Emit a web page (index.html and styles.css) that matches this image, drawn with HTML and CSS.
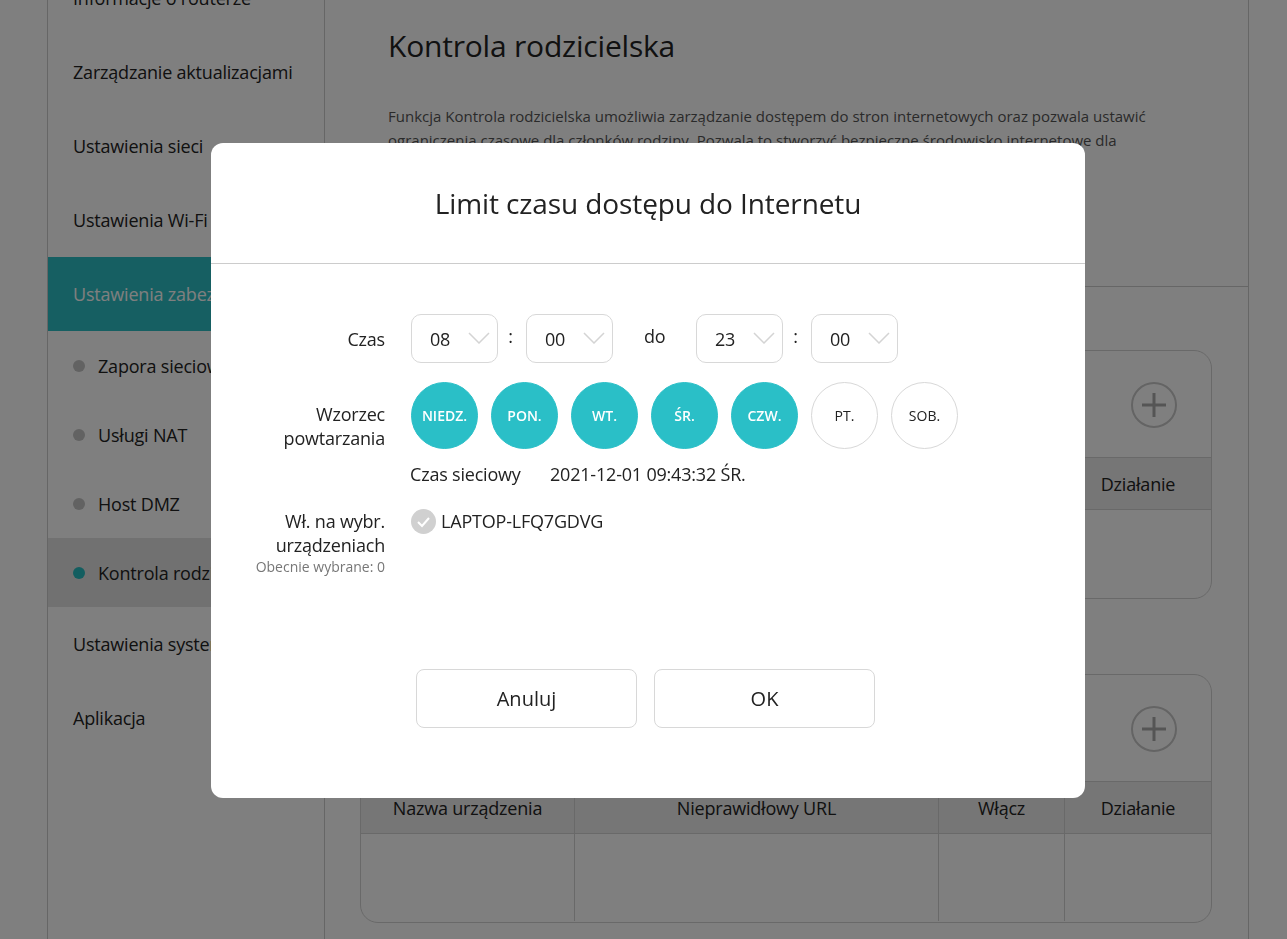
FILE: index.html
```html
<!DOCTYPE html>
<html lang="pl">
<head>
<meta charset="utf-8">
<title>Kontrola rodzicielska</title>
<link rel="stylesheet" href="styles.css">
</head>
<body>
<div class="page">
  <nav class="sidebar">
    <div class="item">Informacje o routerze</div>
    <div class="item">Zarządzanie aktualizacjami</div>
    <div class="item">Ustawienia sieci</div>
    <div class="item">Ustawienia Wi-Fi</div>
    <div class="item item-active">Ustawienia zabezpieczeń</div>
    <div class="sub"><i class="dot"></i>Zapora sieciowa</div>
    <div class="sub"><i class="dot"></i>Usługi NAT</div>
    <div class="sub"><i class="dot"></i>Host DMZ</div>
    <div class="sub sub-active"><i class="dot"></i>Kontrola rodzicielska</div>
    <div class="item">Ustawienia systemu</div>
    <div class="item">Aplikacja</div>
  </nav>
  <main class="content">
    <header class="intro">
      <h1 class="page-title">Kontrola rodzicielska</h1>
      <p class="desc">Funkcja Kontrola rodzicielska umożliwia zarządzanie dostępem do stron internetowych oraz pozwala ustawić ograniczenia czasowe dla członków rodziny. Pozwala to stworzyć bezpieczne środowisko internetowe dla</p>
    </header>
    <section class="panel panel-first">
      <div class="panel-top">
        <span class="plus"><svg width="46" height="46" viewBox="0 0 46 46"><path d="M11 23h24M23 11v24"/></svg></span>
      </div>
      <div class="row row-head">
        <div class="cell"></div><div class="cell"></div><div class="cell"></div><div class="cell">Działanie</div>
      </div>
      <div class="row row-body plain"></div>
    </section>
    <section class="panel panel-second">
      <div class="panel-top">
        <span class="plus"><svg width="46" height="46" viewBox="0 0 46 46"><path d="M11 23h24M23 11v24"/></svg></span>
      </div>
      <div class="row row-head">
        <div class="cell">Nazwa urządzenia</div><div class="cell">Nieprawidłowy URL</div><div class="cell">Włącz</div><div class="cell">Działanie</div>
      </div>
      <div class="row row-body">
        <div class="cell"></div><div class="cell"></div><div class="cell"></div><div class="cell"></div>
      </div>
    </section>
  </main>
</div>

<div class="overlay"></div>

<div class="modal">
  <h2 class="modal-title">Limit czasu dostępu do Internetu</h2>
  <div class="form">
    <div class="label label-time">Czas</div>
    <div class="times">
      <div class="select"><span>08</span><svg class="chev" width="22" height="12" viewBox="0 0 22 12"><path d="M1 1l10 10L21 1"/></svg></div>
      <span class="colon">:</span>
      <div class="select"><span>00</span><svg class="chev" width="22" height="12" viewBox="0 0 22 12"><path d="M1 1l10 10L21 1"/></svg></div>
      <span class="to">do</span>
      <div class="select"><span>23</span><svg class="chev" width="22" height="12" viewBox="0 0 22 12"><path d="M1 1l10 10L21 1"/></svg></div>
      <span class="colon">:</span>
      <div class="select"><span>00</span><svg class="chev" width="22" height="12" viewBox="0 0 22 12"><path d="M1 1l10 10L21 1"/></svg></div>
    </div>
    <div class="label label-repeat">Wzorzec<br>powtarzania</div>
    <div class="repeat">
      <div class="days">
        <span class="day on">NIEDZ.</span>
        <span class="day on">PON.</span>
        <span class="day on">WT.</span>
        <span class="day on">ŚR.</span>
        <span class="day on">CZW.</span>
        <span class="day">PT.</span>
        <span class="day">SOB.</span>
      </div>
      <div class="nettime"><span class="nettime-label">Czas sieciowy</span><span>2021-12-01 09:43:32 ŚR.</span></div>
    </div>
    <div class="label label-dev">Wł. na wybr.<br>urządzeniach<small>Obecnie wybrane: 0</small></div>
    <div class="device">
      <svg class="check" width="25" height="25" viewBox="0 0 25 25"><circle cx="12.5" cy="12.5" r="12.5"/><path d="M7 13l4 4 7-8"/></svg>
      <span>LAPTOP-LFQ7GDVG</span>
    </div>
  </div>
  <div class="actions">
    <button class="btn">Anuluj</button>
    <button class="btn">OK</button>
  </div>
</div>
</body>
</html>
```
FILE: styles.css
```css
* { box-sizing: border-box; }
html, body { margin: 0; height: 100%; overflow: hidden; }
body {
  background: #fff;
  color: #222;
  font-family: "Open Sans", "Noto Sans", "Liberation Sans", sans-serif;
}
.page {
  display: flex;
  width: 1202px;
  height: 939px;
  margin-left: 47px;
  border-left: 1px solid #ccc;
  border-right: 1px solid #ccc;
  overflow: hidden;
}
.sidebar {
  width: 277px;
  flex: none;
  border-right: 1px solid #ccc;
  margin-top: -39px;
  font-size: 18px;
  letter-spacing: -.2px;
}
.item {
  height: 74px;
  line-height: 74px;
  padding-left: 25px;
  white-space: nowrap;
}
.item-active { background: #2dbfc4; color: #fff; }
.sub {
  height: 69px;
  padding-left: 25px;
  display: flex;
  align-items: center;
  white-space: nowrap;
}
.sub-active { background: #e2e2e2; }
.dot {
  width: 12px;
  height: 12px;
  border-radius: 50%;
  background: #c4c4c4;
  margin-right: 13px;
}
.sub-active .dot { background: #27bcc0; }
.content { flex: 1; min-width: 0; }
.intro {
  height: 287px;
  padding: 26px 63px 0;
  border-bottom: 1px solid #ccc;
}
.page-title {
  margin: 0;
  font-size: 30px;
  line-height: 40px;
  font-weight: 400;
  letter-spacing: -.2px;
}
.desc {
  margin: 38px 0 0;
  font-size: 15px;
  line-height: 24px;
  color: #555;
}
.panel {
  width: 852px;
  height: 249px;
  margin-left: 35px;
  border: 1px solid #d2d2d2;
  border-radius: 18px;
  overflow: hidden;
}
.panel-first { margin-top: 63px; }
.panel-second { margin-top: 75px; }
.panel-top {
  height: 106px;
  display: flex;
  justify-content: flex-end;
  align-items: center;
  padding-right: 34px;
  padding-top: 2px;
}
.plus {
  width: 46px;
  height: 46px;
  border: 2px solid #c8c8c8;
  border-radius: 50%;
  display: flex;
  align-items: center;
  justify-content: center;
}
.plus svg { flex: none; }
.plus path { stroke: #aaa; stroke-width: 3; fill: none; }
.row {
  display: grid;
  grid-template-columns: 214px 364px 126px 1fr;
}
.row-head {
  height: 53px;
  background: #ececec;
  border-top: 1px solid #d2d2d2;
  border-bottom: 1px solid #d2d2d2;
  font-size: 18px;
  letter-spacing: -.2px;
}
.row-body { height: 87px; }
.cell {
  display: flex;
  align-items: center;
  justify-content: center;
  border-right: 1px solid #d2d2d2;
}
.panel-first .row-head .cell { border-right: 0; }
.cell:last-child { border-right: 0; }
.overlay {
  position: fixed;
  inset: 0;
  background: rgba(0, 0, 0, .5);
}
.modal {
  position: fixed;
  left: 211px;
  top: 143px;
  width: 874px;
  height: 655px;
  background: #fff;
  border-radius: 12px;
  overflow: hidden;
}
.modal-title {
  margin: 0;
  height: 121px;
  line-height: 120px;
  text-align: center;
  font-size: 28px;
  font-weight: 400;
  border-bottom: 1px solid #ccc;
  letter-spacing: -.1px;
}
.form {
  display: grid;
  grid-template-columns: 174px 1fr;
  column-gap: 26px;
  padding-top: 50px;
  font-size: 18px;
  letter-spacing: -.2px;
}
.label { text-align: right; line-height: 24px; }
.label small {
  display: block;
  font-size: 14px;
  line-height: 20px;
  color: #777;
  letter-spacing: 0;
}
.label-time { padding-top: 13px; height: 68px; }
.label-repeat { padding-top: 20px; }
.label-dev { padding-top: 22px; }
.times { display: flex; align-items: flex-start; height: 68px; }
.select {
  width: 87px;
  height: 49px;
  border: 1px solid #d8d8d8;
  border-radius: 10px;
  display: flex;
  align-items: center;
  padding-left: 18px;
  position: relative;
}
.chev {
  position: absolute;
  right: 7px;
  top: 17px;
}
.chev path { stroke: #d4d4d4; stroke-width: 1.5; fill: none; }
.colon {
  width: 28px;
  padding-right: 3px;
  text-align: center;
  line-height: 44px;
}
.to { width: 83px; padding-left: 31px; line-height: 44px; }
.repeat { min-width: 0; }
.days { display: flex; gap: 13px; }
.day {
  width: 67px;
  height: 67px;
  border-radius: 50%;
  border: 1px solid #d8d8d8;
  display: flex;
  align-items: center;
  justify-content: center;
  font-size: 14px;
  letter-spacing: 0;
}
.day.on {
  background: #2abfc7;
  border-color: #2abfc7;
  color: #fff;
  font-weight: 600;
}
.nettime { display: flex; margin-top: 12px; line-height: 26px; }
.nettime-label { width: 140px; margin-left: -1px; }
.device {
  display: flex;
  align-items: flex-start;
  gap: 5px;
  padding-top: 22px;
  line-height: 24px;
}
.check { flex: none; margin-top: 0; }
.check circle { fill: #d0d0d0; }
.check path { stroke: #fff; stroke-width: 2; fill: none; }
.actions {
  position: absolute;
  left: 205px;
  top: 526px;
  display: flex;
  gap: 17px;
}
.btn {
  width: 221px;
  height: 59px;
  background: #fff;
  border: 1px solid #d8d8d8;
  border-radius: 8px;
  font: inherit;
  font-size: 20px;
  color: #222;
}
```
